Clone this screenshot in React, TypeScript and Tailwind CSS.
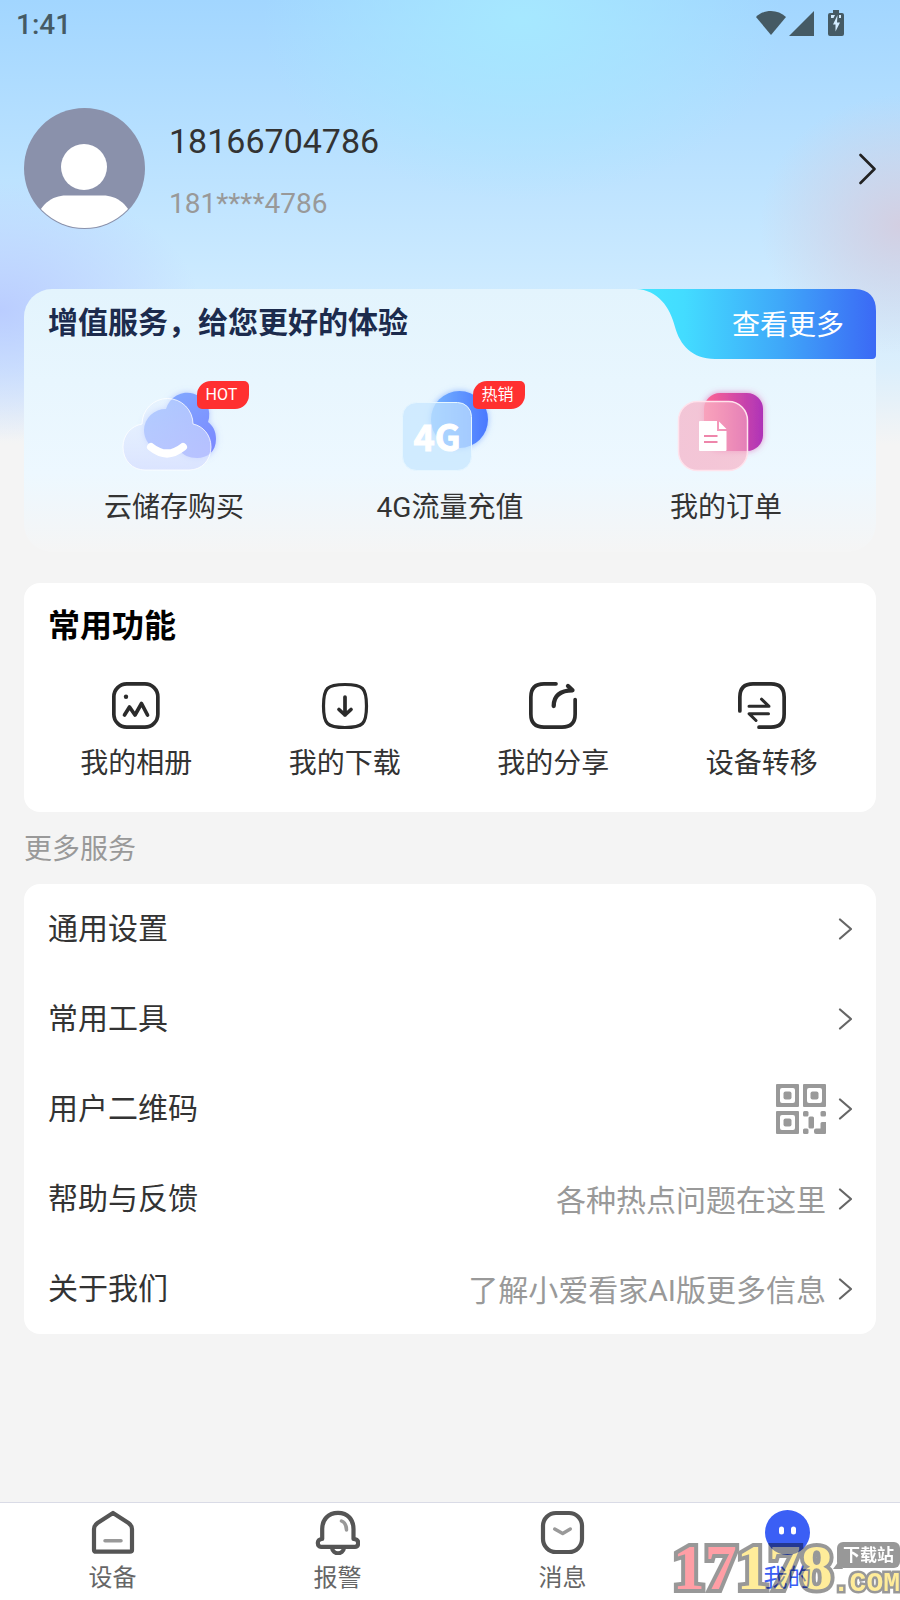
import { useState, type ReactNode } from "react";

function StatusBar() {
  return (
    <div className="flex h-[50px] items-center justify-between pl-4 pr-14 text-[#455a64]">
      <span className="text-[28px] leading-10 font-medium">1:41</span>
      <div className="flex items-center pb-1">
        <svg viewBox="0 0 30 26" className="h-[26px] w-[30px]" fill="currentColor">
          <path d="M0 7 C8 -1 22 -1 30 7 L15 25 Z" />
        </svg>
        <svg viewBox="0 0 25 26" className="ml-[3px] h-[26px] w-[25px]" fill="currentColor">
          <path d="M0 26 L25 1 V26 Z" />
        </svg>
        <svg viewBox="0 0 16 26" className="ml-[14px] h-[26px] w-4" fill="currentColor">
          <path d="M5 0 H11 V3 H14 Q16 3 16 5 V24 Q16 26 14 26 H2 Q0 26 0 24 V5 Q0 3 2 3 H5 Z" />
          <path d="M9.500 5 L5 14.500 H7.500 V21.500 L12 12.500 H9 Z" fill="#d3ecff" />
          <path d="M3 5 H7 L5.500 8 H3 Z M11 5 H13 V8 H11 Z" fill="#d3ecff" />
        </svg>
      </div>
    </div>
  );
}

function Chevron({ className }: { className: string }) {
  return (
    <svg
      viewBox="0 0 14 22"
      className={className}
      fill="none"
      stroke="currentColor"
      strokeWidth="2.200"
      strokeLinecap="round"
      strokeLinejoin="round"
    >
      <path d="M2 1.500 L13 11 L2 20.500" />
    </svg>
  );
}

function Profile() {
  return (
    <a href="#profile" className="flex items-center px-6 pt-[58px] pb-[60px]">
      <svg viewBox="0 0 121 121" className="size-[121px] shrink-0">
        <defs>
          <clipPath id="avatar">
            <circle cx="60.500" cy="60.500" r="59.500" />
          </clipPath>
        </defs>
        <circle cx="60.500" cy="60.500" r="60.500" fill="#8a91ab" />
        <g clipPath="url(#avatar)" fill="#fff">
          <circle cx="60" cy="59" r="23" />
          <path d="M10 116 C16 96 28 87.500 42 87.500 H79 C93 87.500 105 96 111 116 V125 H10 Z" />
        </g>
      </svg>
      <div className="ml-6 flex flex-1 flex-col gap-5 pt-1">
        <span className="text-[34px] leading-[46px] text-[#333]">18166704786</span>
        <span className="text-[28px] leading-10 text-[#999]">181****4786</span>
      </div>
      <svg
        viewBox="0 0 18 32"
        className="h-8 w-[18px] text-[#222]"
        fill="none"
        stroke="currentColor"
        strokeWidth="2.600"
        strokeLinecap="round"
        strokeLinejoin="round"
      >
        <path d="M2.500 2 L16.500 16 L2.500 30" />
      </svg>
    </a>
  );
}

function CloudIcon() {
  return (
    <svg viewBox="0 0 120 100" className="h-[100px] w-[120px]">
      <defs>
        <linearGradient id="cloudBack" x1="0" y1="0" x2="1" y2="1">
          <stop offset="0" stopColor="#84b0ff" />
          <stop offset="1" stopColor="#7a86ff" />
        </linearGradient>
        <linearGradient id="cloudFront" x1="0" y1="0" x2="0" y2="1">
          <stop offset="0" stopColor="#e6f1ff" stopOpacity="0.45" />
          <stop offset="1" stopColor="#d3dbff" stopOpacity="0.7" />
        </linearGradient>
        <filter id="cloudGlow" x="-30%" y="-30%" width="160%" height="160%">
          <feDropShadow dx="0" dy="0" stdDeviation="3" floodColor="#7f96ff" floodOpacity="0.5" />
        </filter>
      </defs>
      <path
        d="M30 52 A21.500 21.500 0 0 1 52 31 A22 22 0 1 1 94 44 C99 48 102 53 102 61 C102 74 93 80 83 80 C75 80 69 77 65 72 C46 78 30 68 30 52 Z"
        fill="url(#cloudBack)"
        filter="url(#cloudGlow)"
      />
      <path
        d="M31 92 C18 92 9 82 9 69 C9 57 17 48 28 46 A25.500 25.500 0 0 1 79 46 C89 48 97 57 97 69 C97 82 88 92 75 92 Z"
        fill="url(#cloudFront)"
        stroke="#fff"
        strokeOpacity="0.8"
      />
      <path d="M37 69 Q53 82 69 69" fill="none" stroke="#fff" strokeWidth="8" strokeLinecap="round" />
    </svg>
  );
}

function DataIcon() {
  return (
    <svg viewBox="0 0 120 100" className="h-[100px] w-[120px]">
      <defs>
        <linearGradient id="dataBack">
          <stop offset="0" stopColor="#76b5ff" />
          <stop offset="1" stopColor="#4a78ff" />
        </linearGradient>
        <filter id="dataGlow" x="-30%" y="-30%" width="160%" height="160%">
          <feDropShadow dx="0" dy="0" stdDeviation="3" floodColor="#5b93ff" floodOpacity="0.6" />
        </filter>
      </defs>
      <circle cx="69.500" cy="41.500" r="28.500" fill="url(#dataBack)" filter="url(#dataGlow)" />
      <rect
        x="12.500"
        y="24.500"
        width="69"
        height="68"
        rx="14"
        fill="#c4e6ff"
        fillOpacity="0.7"
        stroke="#e6f6ff"
      />
      <text
        x="47"
        y="73"
        textAnchor="middle"
        className="font-['Liberation_Sans_Narrow','Noto_Sans_CJK_SC',sans-serif]"
        fontSize="36"
        fontWeight="700"
        fill="#fff"
        stroke="#fff"
      >
        4G
      </text>
    </svg>
  );
}

function OrderIcon() {
  return (
    <svg viewBox="0 0 120 100" className="h-[100px] w-[120px]">
      <defs>
        <linearGradient id="orderBack">
          <stop offset="0" stopColor="#ff6692" />
          <stop offset="1" stopColor="#ae33b8" />
        </linearGradient>
        <linearGradient id="orderFront">
          <stop offset="0" stopColor="#f4bdd0" stopOpacity="0.85" />
          <stop offset="1" stopColor="#f9a9bf" stopOpacity="0.6" />
        </linearGradient>
        <filter id="orderGlow" x="-30%" y="-30%" width="160%" height="160%">
          <feDropShadow dx="0" dy="0" stdDeviation="3" floodColor="#d84aa5" floodOpacity="0.6" />
        </filter>
      </defs>
      <rect x="38" y="15" width="59" height="58" rx="16" fill="url(#orderBack)" filter="url(#orderGlow)" />
      <rect
        x="12.500"
        y="23.500"
        width="69"
        height="69"
        rx="19"
        fill="url(#orderFront)"
        stroke="#ffe3ec"
        strokeWidth="1.500"
      />
      <path d="M34 43 H51 V53 H60.500 V72 Q60.500 73 59.500 73 H34 Q33 73 33 72 V44 Q33 43 34 43 Z" fill="#fff" />
      <path d="M53 43.500 L60.500 51 H53 Z" fill="#fff" />
      <path d="M38 58 H51.500 M38 64 H51.500" stroke="#ee86ab" strokeWidth="2" />
    </svg>
  );
}

const services = [
  { label: "云储存购买", icon: <CloudIcon />, badge: "HOT" },
  { label: "4G流量充值", icon: <DataIcon />, badge: "热销" },
  { label: "我的订单", icon: <OrderIcon /> },
];

function ServiceCard() {
  return (
    <section className="rounded-[28px] bg-linear-to-b from-[#e3f4fd] via-[#edf8ff] via-70% to-[#f5f5f5]">
      <div className="flex items-start justify-between">
        <h2 className="pt-3 pl-6 text-[30px] leading-[44px] font-bold text-[#1c2b4d]">
          增值服务，给您更好的体验
        </h2>
        <a href="#more" className="relative h-[70px] w-60 pr-8 text-right text-[28px] leading-[74px] text-white">
          <svg viewBox="0 0 240 70" className="absolute inset-0 h-full w-full">
            <defs>
              <linearGradient id="moreTab">
                <stop offset="0" stopColor="#44e6ff" />
                <stop offset="0.200" stopColor="#43dcff" />
                <stop offset="0.600" stopColor="#3fa8f9" />
                <stop offset="1" stopColor="#3b69f5" />
              </linearGradient>
            </defs>
            <path
              d="M0 0 H219 Q240 1 240 22 V66 Q240 70 236 70 H79 C56 70 44 56 39 38 C34 18 22 1 0 0 Z"
              fill="url(#moreTab)"
            />
          </svg>
          <span className="relative">查看更多</span>
        </a>
      </div>
      <div className="grid grid-cols-3 px-3 pt-[19px] pb-6">
        {services.map((item) => (
          <a key={item.label} href="#service" className="flex flex-col items-center">
            <div className="relative">
              {item.icon}
              {item.badge && (
                <span className="absolute top-[3px] left-[83px] flex h-7 w-[52px] items-center justify-center rounded-tl-[14px] rounded-tr-[5px] rounded-br-[14px] rounded-bl-[5px] bg-[#ff3030] pr-[3px] text-base text-white">
                  {item.badge}
                </span>
              )}
            </div>
            <span className="mt-[10px] text-[28px] leading-10 text-[#333]">{item.label}</span>
          </a>
        ))}
      </div>
    </section>
  );
}

function LineIcon({ children }: { children: ReactNode }) {
  return (
    <svg
      viewBox="0 0 48 48"
      className="size-12 text-[#2b2b2b]"
      fill="none"
      stroke="currentColor"
      strokeWidth="3.700"
      strokeLinecap="round"
      strokeLinejoin="round"
    >
      {children}
    </svg>
  );
}

const functions = [
  {
    label: "我的相册",
    icon: (
      <LineIcon>
        <rect x="1.850" y="1.850" width="44" height="43.300" rx="13" />
        <circle cx="14" cy="14.800" r="2.200" fill="currentColor" stroke="none" />
        <path d="M12.500 33 L17.500 25 L23 33 L29.500 21.500 L35.500 33" />
      </LineIcon>
    ),
  },
  {
    label: "我的下载",
    icon: (
      <LineIcon>
        <path
          d="M24 2.500 C42 2.500 45.500 6 45.500 24 C45.500 42 42 45.500 24 45.500 C6 45.500 2.500 42 2.500 24 C2.500 6 6 2.500 24 2.500 Z"
          strokeWidth="3.200"
        />
        <path d="M24 15 V33 M18 27.500 L24 33 L30 27.500" />
      </LineIcon>
    ),
  },
  {
    label: "我的分享",
    icon: (
      <LineIcon>
        <path d="M27 1.850 H15 Q1.850 1.850 1.850 15 V32 Q1.850 45.150 15 45.150 H33 Q46.150 45.150 46.150 32 V17.500" />
        <path d="M24.700 24 C24.700 14 31 8.300 43.500 8.300 L39 4" strokeWidth="4.300" />
      </LineIcon>
    ),
  },
  {
    label: "设备转移",
    icon: (
      <LineIcon>
        <path d="M1.850 29 V15 Q1.850 1.850 15 1.850 H33 Q46.150 1.850 46.150 15 V32 Q46.150 45.150 33 45.150 H21" />
        <path d="M11 24.300 H31 L23.500 17.200 M30.500 31.700 H11 L18 38.500" strokeWidth="3" />
      </LineIcon>
    ),
  },
];

function FunctionCard() {
  return (
    <section className="mt-[31px] rounded-2xl bg-white pt-[21px] pb-7">
      <h2 className="pl-6 text-[32px] leading-[44px] font-bold text-black">常用功能</h2>
      <div className="mt-[34px] grid grid-cols-4 pr-[10px] pl-2">
        {functions.map((item) => (
          <a key={item.label} href="#function" className="flex flex-col items-center">
            {item.icon}
            <span className="mt-[14px] text-[28px] leading-10 text-[#333]">{item.label}</span>
          </a>
        ))}
      </div>
    </section>
  );
}

function QrIcon() {
  return (
    <svg viewBox="0 0 50 50" className="size-[50px]" fill="#999">
      <path
        fillRule="evenodd"
        d="M1 0 H22 Q23 0 23 1 V22 Q23 23 22 23 H1 Q0 23 0 22 V1 Q0 0 1 0 Z M6 4 Q4 4 4 6 V17 Q4 19 6 19 H17 Q19 19 19 17 V6 Q19 4 17 4 Z"
      />
      <path
        fillRule="evenodd"
        d="M28 0 H49 Q50 0 50 1 V22 Q50 23 49 23 H28 Q27 23 27 22 V1 Q27 0 28 0 Z M33 4 Q31 4 31 6 V17 Q31 19 33 19 H44 Q46 19 46 17 V6 Q46 4 44 4 Z"
      />
      <path
        fillRule="evenodd"
        d="M1 27 H22 Q23 27 23 28 V49 Q23 50 22 50 H1 Q0 50 0 49 V28 Q0 27 1 27 Z M6 31 Q4 31 4 33 V44 Q4 46 6 46 H17 Q19 46 19 44 V33 Q19 31 17 31 Z"
      />
      <rect x="7.500" y="7.500" width="8" height="8" rx="2" />
      <rect x="34.500" y="7.500" width="8" height="8" rx="2" />
      <rect x="7.500" y="34.500" width="8" height="8" rx="2" />
      <rect x="27" y="27" width="5.500" height="5.500" rx="1.500" />
      <rect x="44.500" y="27" width="5.500" height="5.500" rx="1.500" />
      <rect x="32.500" y="32.500" width="5.500" height="12" rx="1.500" />
      <rect x="27" y="44.500" width="5.500" height="5.500" rx="1.500" />
      <path d="M46 38 H50 V49 Q50 50 49 50 H40 Q38 50 38 48 V46.500 Q38 44.500 40 44.500 H44.500 V39.500 Q44.500 38 46 38 Z" />
    </svg>
  );
}

const settings: { label: string; extra?: ReactNode }[] = [
  { label: "通用设置" },
  { label: "常用工具" },
  { label: "用户二维码", extra: <QrIcon /> },
  { label: "帮助与反馈", extra: "各种热点问题在这里" },
  { label: "关于我们", extra: "了解小爱看家AI版更多信息" },
];

function SettingList() {
  return (
    <section>
      <h2 className="pt-1 text-[28px] leading-[68px] text-[#999]">更多服务</h2>
      <ul className="rounded-2xl bg-white">
        {settings.map((item) => (
          <li key={item.label}>
            <a href="#setting" className="flex h-[90px] items-center px-6 text-[30px] leading-[44px] text-[#333]">
              <span className="mr-auto">{item.label}</span>
              {typeof item.extra === "string" ? (
                <span className="pt-1 text-[#999]">{item.extra}</span>
              ) : (
                item.extra
              )}
              <Chevron className="ml-3 h-[22px] w-[14px] text-[#666]" />
            </a>
          </li>
        ))}
      </ul>
    </section>
  );
}

const tabs = [
  {
    label: "设备",
    icon: (
      <>
        <path d="M23 3 L38.500 13 Q42 15.500 42 19 V40 Q42 41.700 40 41.700 H6 Q4 41.700 4 40 V19 Q4 15.500 7.500 13 Z" />
        <path d="M15 30.700 H31" stroke="#999" strokeWidth="3.500" />
      </>
    ),
  },
  {
    label: "报警",
    icon: (
      <>
        <path d="M23 2.800 C13 2.800 7.200 10 7.200 19 V29 C4 29 2.800 31 2.800 33 Q3 36.800 6 36.800 H40 Q43 36.800 43.200 33 C43.200 31 42 29 38.500 29 V19 C38.500 10 33 2.800 23 2.800 Z" />
        <path d="M17 38 C18 45 28 45 29 38" />
        <path d="M26.500 11 Q31.500 13 31.500 20" stroke="#999" strokeWidth="3.500" />
      </>
    ),
  },
  {
    label: "消息",
    icon: (
      <>
        <rect x="3" y="3" width="39" height="39" rx="13" />
        <path d="M14.700 19 L22.700 23.500 L30.300 19" stroke="#999" strokeWidth="3.500" />
      </>
    ),
  },
  {
    label: "我的",
    icon: (
      <>
        <circle cx="22.500" cy="22.500" r="22.500" fill="#3b5ff5" stroke="none" />
        <rect x="14" y="16.500" width="5" height="8" rx="2.500" fill="#fff" stroke="none" />
        <rect x="26" y="16.500" width="5" height="8" rx="2.500" fill="#fff" stroke="none" />
      </>
    ),
  },
];

function SiteMark() {
  return (
    <div className="pointer-events-none absolute right-0 bottom-0 flex items-end opacity-40">
      <span className="font-['Liberation_Serif',serif] text-[64px] leading-[64px] font-bold text-[#ffd004] [paint-order:stroke] [-webkit-text-stroke:8px_#000]">
        <span className="text-[#ff1020]">17</span>178
      </span>
      <span className="flex flex-col items-end">
        <span className="relative rounded-md bg-black px-[6px] text-[17px] leading-[26px] font-bold text-white">
          <svg viewBox="0 0 10 8" className="absolute -bottom-px -left-1 h-2 w-[10px]">
            <path d="M0 8 L6 0 L10 8 Z" fill="#000" />
          </svg>
          下载站
        </span>
        <span className="font-['Liberation_Mono',monospace] text-[28px] leading-8 font-bold text-[#ffd004] [paint-order:stroke] [-webkit-text-stroke:5px_#000]">
          .COM
        </span>
      </span>
    </div>
  );
}

function TabBar() {
  const [active, setActive] = useState("我的");

  return (
    <nav className="relative grid grid-cols-4 border-t border-[#d9dbe6] bg-white pt-[7px] pb-1">
      {tabs.map((tab) => (
        <button key={tab.label} type="button" onClick={() => setActive(tab.label)} className="flex flex-col items-center">
          <svg
            viewBox="0 0 45 45"
            className="size-[45px]"
            fill="none"
            stroke="#555"
            strokeWidth="4.200"
            strokeLinecap="round"
            strokeLinejoin="round"
          >
            {tab.icon}
          </svg>
          <span
            className={
              active === tab.label
                ? "mt-[5px] text-2xl leading-9 text-[#3b5ff5]"
                : "mt-[5px] text-2xl leading-9 text-[#666]"
            }
          >
            {tab.label}
          </span>
        </button>
      ))}
      <SiteMark />
    </nav>
  );
}

export default function App() {
  return (
    <div className="flex min-h-screen flex-col bg-[#f4f4f4] bg-[radial-gradient(ellipse_260px_180px_at_58%_20px,#a6e8ff_0%,#a6e8ff00_100%),radial-gradient(ellipse_200px_130px_at_0_310px,#bacdff_0%,#bacdff00_100%),radial-gradient(ellipse_140px_130px_at_100%_225px,#d3cfe2_0%,#d3cfe200_100%),linear-gradient(#a2d6ff_0,#cceaff_280px,#dceffc_370px,#f4f4f4_445px)] font-[Roboto,'Noto_Sans_CJK_SC',sans-serif]">
      <StatusBar />
      <Profile />
      <main className="flex-1 px-6 pb-8">
        <ServiceCard />
        <FunctionCard />
        <SettingList />
      </main>
      <TabBar />
    </div>
  );
}
